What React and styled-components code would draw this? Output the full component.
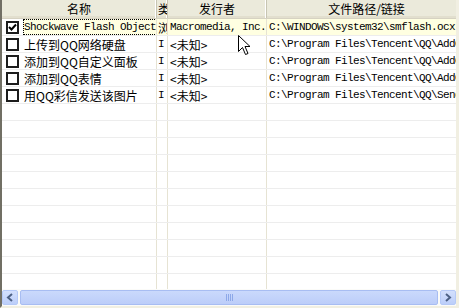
import React from 'react'
import styled, { createGlobalStyle } from 'styled-components'

const GlobalStyle = createGlobalStyle`
  html, body {
    margin: 0;
    padding: 0;
    background: #ffffff;
  }
`

const COLS = [155, 11, 99, 200]

const MONO = `
  font-family: "Liberation Mono", monospace;
  font-size: 11px;
  letter-spacing: -0.6px;
`
const CJK = `
  font-family: "Noto Sans CJK SC", sans-serif;
  font-size: 12px;
`

const ListView = styled.div`
  position: relative;
  width: 459px;
  height: 308px;
  box-sizing: border-box;
  border-left: 2px solid #716f64;
  border-right: 3px solid #f1efe2;
  border-bottom: 2px solid #f1efe2;
  background: #ffffff;
  overflow: hidden;
  display: flex;
  flex-direction: column;
`

const Body = styled.div`
  flex: 1;
  overflow: hidden;
`

const Header = styled.div`
  display: flex;
  height: 18px;
  background: #ebeadb;
  border-bottom: 1px solid #d6d2c2;
  box-shadow: inset 0 -2px 0 #e2dfce;
`

const HeaderCell = styled.div`
  flex: none;
  width: ${p => p.w}px;
  box-sizing: border-box;
  border-right: 1px solid #c7c5b2;
  box-shadow: inset -1px 0 0 #ffffff;
  ${CJK}
  line-height: 18px;
  color: #000;
  text-align: ${p => (p.clip ? 'left' : 'center')};
  padding-left: ${p => (p.clip ? 1 : 0)}px;
  white-space: nowrap;
  overflow: hidden;
`

const Row = styled.div`
  display: flex;
  height: 17px;
  border-bottom: 1px solid #ededed;
  box-sizing: border-box;
`

const Cell = styled.div`
  flex: none;
  width: ${p => p.w}px;
  box-sizing: border-box;
  border-right: 1px solid #e6e3d3;
  display: flex;
  align-items: center;
  white-space: nowrap;
  overflow: hidden;
  padding-left: ${p => (p.narrow ? 1 : 2)}px;
  background: ${p => (p.selected ? '#ffffe1' : 'transparent')};
  ${p => (p.mono ? MONO : CJK)}
  color: #000;
`

const NameCell = styled(Cell)`
  padding-left: 4px;
  gap: 4px;
  background: transparent;
`

const Label = styled.span`
  display: flex;
  align-items: center;
  height: 16px;
  padding: 0 1px;
  flex: 1;
  background: ${p => (p.selected ? '#ffffe1' : 'transparent')};
  outline: ${p => (p.selected ? '1px dotted #000' : 'none')};
  outline-offset: -1px;
  ${p => (p.mono ? MONO : CJK)}
`

const Check = styled.span`
  flex: none;
  width: 13px;
  height: 13px;
  box-sizing: border-box;
  border: 2px solid #1c1c1c;
  background: #fff;
  display: flex;
  align-items: center;
  justify-content: center;
`

const ScrollBar = styled.div`
  display: flex;
  height: 17px;
  background: #fbfbf8;
  padding: 1px 0;
  box-sizing: border-box;
  gap: 1px;
`

const ScrollButton = styled.div`
  flex: none;
  width: 16px;
  box-sizing: border-box;
  border: 1px solid #b5c9f7;
  border-radius: 2px;
  background: linear-gradient(#d3e0fd, #bccef9);
  display: flex;
  align-items: center;
  justify-content: center;
`

const Thumb = styled.div`
  flex: 1;
  margin: 0 1px;
  box-sizing: border-box;
  border: 1px solid #a8bdf2;
  border-radius: 2px;
  background: linear-gradient(#cad9fc, #bccdf9);
  display: flex;
  align-items: center;
  justify-content: center;
  gap: 1px;
`

const Grip = styled.span`
  width: 1px;
  height: 7px;
  background: #8da8e8;
`

const Cursor = styled.svg`
  position: absolute;
  left: 236px;
  top: 35px;
`

const rows = [
  { name: 'Shockwave Flash Object', mono: true, type: '浏', pub: 'Macromedia, Inc.', pubMono: true, path: 'C:\\WINDOWS\\system32\\smflash.ocx', checked: true, selected: true },
  { name: '上传到QQ网络硬盘', type: 'I', pub: '<未知>', path: 'C:\\Program Files\\Tencent\\QQ\\AddOn' },
  { name: '添加到QQ自定义面板', type: 'I', pub: '<未知>', path: 'C:\\Program Files\\Tencent\\QQ\\AddOn' },
  { name: '添加到QQ表情', type: 'I', pub: '<未知>', path: 'C:\\Program Files\\Tencent\\QQ\\AddOn' },
  { name: '用QQ彩信发送该图片', type: 'I', pub: '<未知>', path: 'C:\\Program Files\\Tencent\\QQ\\SendPic' },
]

const CheckMark = () => (
  <svg width="9" height="9" viewBox="0 0 9 9">
    <path d="M1 4 L3.5 6.5 L8 1.5" fill="none" stroke="#000" strokeWidth="2" />
  </svg>
)

const App = () => {
  const empty = Array.from({ length: 11 })
  return (
    <>
      <GlobalStyle />
      <ListView>
        <Header>
          <HeaderCell w={COLS[0]}>名称</HeaderCell>
          <HeaderCell w={COLS[1]} clip>类</HeaderCell>
          <HeaderCell w={COLS[2]}>发行者</HeaderCell>
          <HeaderCell w={COLS[3]}>文件路径/链接</HeaderCell>
        </Header>
        <Body>
          {rows.map((r, i) => (
            <Row key={i}>
              <NameCell w={COLS[0]}>
                <Check>{r.checked && <CheckMark />}</Check>
                <Label mono={r.mono} selected={r.selected}>{r.name}</Label>
              </NameCell>
              <Cell w={COLS[1]} narrow selected={r.selected} mono={!r.selected}>{r.type}</Cell>
              <Cell w={COLS[2]} selected={r.selected} mono={r.pubMono}>{r.pub}</Cell>
              <Cell w={COLS[3]} selected={r.selected} mono>{r.path}</Cell>
            </Row>
          ))}
          {empty.map((_, i) => (
            <Row key={'e' + i}>
              {COLS.map((w, j) => (
                <Cell key={j} w={w} />
              ))}
            </Row>
          ))}
        </Body>
        <ScrollBar>
          <ScrollButton>
            <svg width="8" height="9" viewBox="0 0 8 9">
              <path d="M6 1 L2 4.5 L6 8" fill="none" stroke="#4d6185" strokeWidth="2" />
            </svg>
          </ScrollButton>
          <Thumb>
            <Grip /><Grip /><Grip /><Grip />
          </Thumb>
          <ScrollButton>
            <svg width="8" height="9" viewBox="0 0 8 9">
              <path d="M2 1 L6 4.5 L2 8" fill="none" stroke="#4d6185" strokeWidth="2" />
            </svg>
          </ScrollButton>
        </ScrollBar>
        <Cursor width="13" height="21" viewBox="0 0 13 21">
          <path d="M0.5 0.5 L0.5 16.5 L4.5 12.5 L7.5 19.5 L10 18.5 L7 11.5 L12 11.5 Z" fill="#fff" stroke="#000" strokeWidth="1" />
        </Cursor>
      </ListView>
    </>
  )
}

export default App
